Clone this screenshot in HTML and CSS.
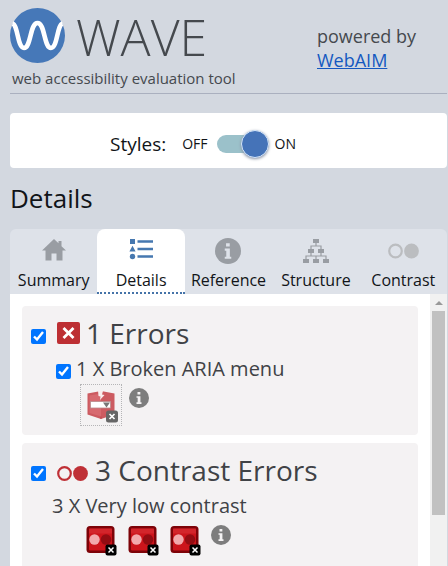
FILE: index.html
```html
<!DOCTYPE html>
<html lang="en">
<head>
<meta charset="utf-8">
<title>WAVE</title>
<link rel="stylesheet" href="styles.css">
</head>
<body>
<svg class="sprite" aria-hidden="true">
  <symbol id="info" viewBox="0 0 24 24">
    <circle cx="12" cy="12" r="12" fill="currentColor"/>
    <path class="info-mark" d="M10.2 4.8h3.4v3h-3.4zM9 9.8h4.7v7.4H15v2H9v-2h1.4v-5.4H9z"/>
  </symbol>
  <symbol id="rings" viewBox="0 0 31 15">
    <circle cx="7.5" cy="7.5" r="6.3" fill="none" stroke="currentColor" stroke-width="2.2"/>
    <circle cx="23.5" cy="7.5" r="7.4" fill="currentColor"/>
  </symbol>
  <symbol id="lowcontrast" viewBox="0 0 32 32">
    <rect x="1.5" y="2" width="28" height="27" rx="3.5" fill="#7d0308"/>
    <rect x="4" y="4.5" width="23" height="22" rx="1" fill="#cc141b"/>
    <path d="M4 4.500h23v5H4z" fill="#d9363b" opacity=".5"/>
    <circle cx="9.500" cy="15.500" r="5.200" fill="#f2a9ac"/>
    <circle cx="21" cy="15.500" r="5.200" fill="#930c12"/>
    <rect x="20.500" y="20.500" width="11" height="11" rx="2" fill="#000"/>
    <path d="M23.500 23.500l5 5m0-5l-5 5" stroke="#fff" stroke-width="1.500"/>
  </symbol>
</svg>

<header class="header">
  <div class="brand">
    <div class="brand-row">
      <svg class="logo" viewBox="0 0 55 55" aria-hidden="true">
        <circle cx="27.500" cy="27.500" r="27.500" fill="#4678b8"/>
        <path d="M2.500 15.500C8 17 7.500 40 14 40C21 40 20 15 27.500 15C35 15 34 40 41 40C47.500 40 47 17 52.500 15.500" fill="none" stroke="#fff" stroke-width="4.600"/>
      </svg>
      <h1 class="name">WAVE</h1>
    </div>
    <p class="tagline">web accessibility evaluation tool</p>
  </div>
  <p class="powered">powered by<br><a href="#">WebAIM</a></p>
</header>

<section class="styles-bar">
  <span class="styles-label" id="styles-label">Styles:</span>
  <span class="state">OFF</span>
  <input class="switch" type="checkbox" role="switch" aria-labelledby="styles-label" checked>
  <span class="state">ON</span>
</section>

<h2 class="title">Details</h2>

<nav class="tabs">
  <button class="tab" type="button">
    <svg class="tab-icon" viewBox="0 0 26 26" aria-hidden="true"><path d="M13 1L1 12.500H4.500V22.500H10.500V15.500h5V22.500H21.500V12.500H25L20.500 8.200V3h-3v2.300z" fill="currentColor"/></svg>
    <span>Summary</span>
  </button>
  <button class="tab tab-active" type="button">
    <svg class="tab-icon" viewBox="0 0 26 26" aria-hidden="true"><path d="M2 1h5v5H2zM4.500 7.700L7.600 13.500H1.400zM9.500 2.200H25v2.600H9.500zM9.500 9.700H25v2.600H9.500zM9.500 17.200H25v2.600H9.500z" fill="currentColor"/><circle cx="4.500" cy="18.500" r="2.700" fill="currentColor"/></svg>
    <span>Details</span>
  </button>
  <button class="tab" type="button">
    <svg class="tab-icon" aria-hidden="true"><use href="#info"/></svg>
    <span>Reference</span>
  </button>
  <button class="tab" type="button">
    <svg class="tab-icon" viewBox="0 0 26 26" aria-hidden="true"><path d="M10 1h6v4h-6zM5 11h6v4H5zM15 11h6v4h-6zM0 21h6v4H0zM10 21h6v4h-6zM20 21h6v4h-6z" fill="currentColor"/><path d="M13 5v3M8 11V8h10v3M8 15v3M18 15v3M3 21v-3h20v3M13 18v3" fill="none" stroke="currentColor" stroke-width="1.200"/></svg>
    <span>Structure</span>
  </button>
  <button class="tab" type="button">
    <svg class="tab-icon tab-icon-wide" aria-hidden="true"><use href="#rings"/></svg>
    <span>Contrast</span>
  </button>
</nav>

<main class="panel">
  <div class="list">
    <section class="group group-errors">
      <h3 class="group-title">
        <input class="check" type="checkbox" id="errors" checked>
        <svg class="error-icon" viewBox="0 0 23 22" aria-hidden="true"><rect width="23" height="22" rx="2" fill="#bd2f33"/><path d="M6.500 6l10 10m0-10l-10 10" stroke="#fff" stroke-width="2.800"/></svg>
        <label for="errors">1 Errors</label>
      </h3>
      <div class="item item-checked">
        <input class="check" type="checkbox" id="menu" checked>
        <label for="menu">1 X Broken ARIA menu</label>
      </div>
      <div class="icons icons-menu">
        <button class="mark mark-hidden" type="button" aria-label="Broken ARIA menu">
          <svg viewBox="0 0 40 40" aria-hidden="true">
            <path d="M6.500 8.500L20 6l13.500 2.500v21L20 34 6.500 29.500z" fill="#cc5b61"/>
            <path d="M8.500 10.500L20 8.500v23L8.500 28z" fill="#d76a70"/>
            <path d="M20 31.500V34" stroke="#b94a50"/>
            <path d="M17 5.500l5 .5-1 3.500 2.500.5-4.500 5 .5-3.500-2-.5z" fill="#f9eeee"/>
            <rect x="9.500" y="16.500" width="20" height="6.500" fill="#fff" stroke="#b9898b" stroke-width=".8"/>
            <path d="M22 17.500h7l-3.500 5z" fill="#777"/>
            <rect x="25" y="25.500" width="12" height="12" rx="2.500" fill="#666"/>
            <path d="M28.500 29l5 5m0-5l-5 5" stroke="#fff" stroke-width="1.700"/>
          </svg>
        </button>
        <svg class="info" aria-hidden="true"><use href="#info"/></svg>
      </div>
    </section>

    <section class="group">
      <h3 class="group-title">
        <input class="check" type="checkbox" id="contrast" checked>
        <svg class="rings" aria-hidden="true"><use href="#rings"/></svg>
        <label for="contrast">3 Contrast Errors</label>
      </h3>
      <div class="item">3 X Very low contrast</div>
      <div class="icons">
        <button class="mark" type="button" aria-label="Very low contrast"><svg aria-hidden="true"><use href="#lowcontrast"/></svg></button>
        <button class="mark" type="button" aria-label="Very low contrast"><svg aria-hidden="true"><use href="#lowcontrast"/></svg></button>
        <button class="mark" type="button" aria-label="Very low contrast"><svg aria-hidden="true"><use href="#lowcontrast"/></svg></button>
        <svg class="info" aria-hidden="true"><use href="#info"/></svg>
      </div>
    </section>
  </div>
  <div class="scrollbar" aria-hidden="true">
    <span class="scroll-up"></span>
    <span class="scroll-thumb"></span>
  </div>
</main>
</body>
</html>
```
FILE: styles.css
```css
* {
  box-sizing: border-box;
}

body {
  margin: 0;
  padding: 8px 1px 0 10px;
  height: 100vh;
  overflow: hidden;
  display: flex;
  flex-direction: column;
  background: #d3d8e0;
  color: #111418;
  font-family: "Open Sans", "Noto Sans", sans-serif;
}

h1, h2, h3, p {
  margin: 0;
  font-weight: 400;
}

button {
  font: inherit;
  color: inherit;
  border: 0;
  background: none;
  padding: 0;
}

svg {
  display: block;
  flex: none;
}

.sprite {
  position: absolute;
  width: 0;
  height: 0;
}

.info-mark {
  fill: var(--mark, #f4f2f3);
}

.header {
  display: flex;
  border-bottom: 1px solid #aab0bf;
  height: 86px;
  flex: none;
  color: #45494e;
}

.brand {
  width: 307px;
}

.brand-row {
  display: flex;
  gap: 11px;
  height: 58px;
}

.logo {
  width: 55px;
  height: 55px;
}

.name {
  font-size: 50px;
  font-weight: 300;
  line-height: 58px;
}

.tagline {
  padding-left: 2px;
  font-size: 15px;
  line-height: 24px;
}

.powered {
  padding-top: 16px;
  font-size: 18px;
  line-height: 24px;
}

.powered a {
  color: #1558c0;
}

.styles-bar {
  display: flex;
  align-items: center;
  flex: none;
  height: 55px;
  margin-top: 19px;
  padding: 6px 0 0 100px;
  border-radius: 4px;
  background: #fff;
}

.styles-label {
  margin-right: 16px;
  font-size: 19px;
}

.state {
  font-size: 14px;
}

.switch {
  appearance: none;
  display: flex;
  justify-content: flex-end;
  align-items: center;
  width: 52px;
  height: 18px;
  margin: 0 6px 0 9px;
  border-radius: 9px;
  background: #9bc1ca;
}

.switch::before {
  content: "";
  flex: none;
  width: 26px;
  height: 26px;
  border: 1px solid #d6e7fb;
  border-radius: 50%;
  background: #4573b8;
  box-shadow: 0 1px 3px #8a93a5;
}

.title {
  margin-top: 12px;
  font-size: 26px;
  line-height: 36px;
}

.tabs {
  display: grid;
  grid-template-columns: repeat(5, 1fr);
  flex: none;
  margin-top: 13px;
  border-radius: 6px 6px 0 0;
  background: #dee2e9;
}

.tab {
  display: flex;
  flex-direction: column;
  align-items: center;
  gap: 4px;
  height: 65px;
  padding-top: 9px;
  border-bottom: 2px solid transparent;
  font-size: 16px;
  line-height: 24px;
}

.tab-active {
  border-bottom: 2px dotted #4573a8;
  border-radius: 8px 8px 0 0;
  background: #fff;
}

.tab-icon {
  width: 26px;
  height: 26px;
  color: #999da3;
  --mark: #dee2e9;
}

.tab-icon-wide {
  width: 31px;
  color: #bbbdc0;
}

.tab-active .tab-icon {
  color: #4678b0;
}

.panel {
  display: flex;
  flex: 1;
  min-height: 0;
  background: #fff;
}

.list {
  flex: 1;
  display: flex;
  flex-direction: column;
  gap: 8px;
  padding: 12px 12px 0;
  color: #404246;
}

.group {
  flex: none;
  min-height: 129px;
  padding: 8px;
  border-radius: 4px;
  background: #f4f2f3;
}

.group-title {
  display: flex;
  align-items: center;
  height: 40px;
  font-size: 28px;
  line-height: 36px;
}

.group-title label {
  padding-bottom: 2px;
}

.check {
  width: 15px;
  height: 15px;
  margin: 4px 11px 0 1px;
}

.error-icon {
  width: 23px;
  height: 22px;
  margin: 0 6px 2px 0;
}

.rings {
  width: 31px;
  height: 15px;
  margin: 4px 7px 0 0;
  color: #bf3036;
}

.item {
  display: flex;
  align-items: center;
  padding-left: 22px;
  font-size: 20px;
  line-height: 30px;
}

.item-checked {
  padding-left: 25px;
}

.item-checked .check {
  margin-right: 5px;
}

.icons {
  display: flex;
  align-items: flex-start;
  gap: 10px;
  padding: 0 0 0 55px;
}

.icons .mark {
  padding-top: 3px;
}

.icons-menu {
  gap: 7px;
  padding: 0 0 0 50px;
}

.mark svg {
  width: 32px;
  height: 32px;
}

.icons .mark-hidden {
  padding: 0;
  border: 1px dotted #b5b5b7;
}

.mark-hidden svg {
  width: 40px;
  height: 40px;
}

.info {
  width: 20px;
  height: 20px;
  margin-top: 4px;
  color: #7d7d7d;
}

.scrollbar {
  width: 17px;
  padding: 0 2px;
  background: #f1f1f1;
}

.scroll-up {
  display: block;
  width: 0;
  margin: 7px auto 6px;
  border: 4px solid transparent;
  border-top: 0;
  border-bottom-color: #999;
}

.scroll-thumb {
  display: block;
  height: 75%;
  background: #c1c1c1;
}
```
